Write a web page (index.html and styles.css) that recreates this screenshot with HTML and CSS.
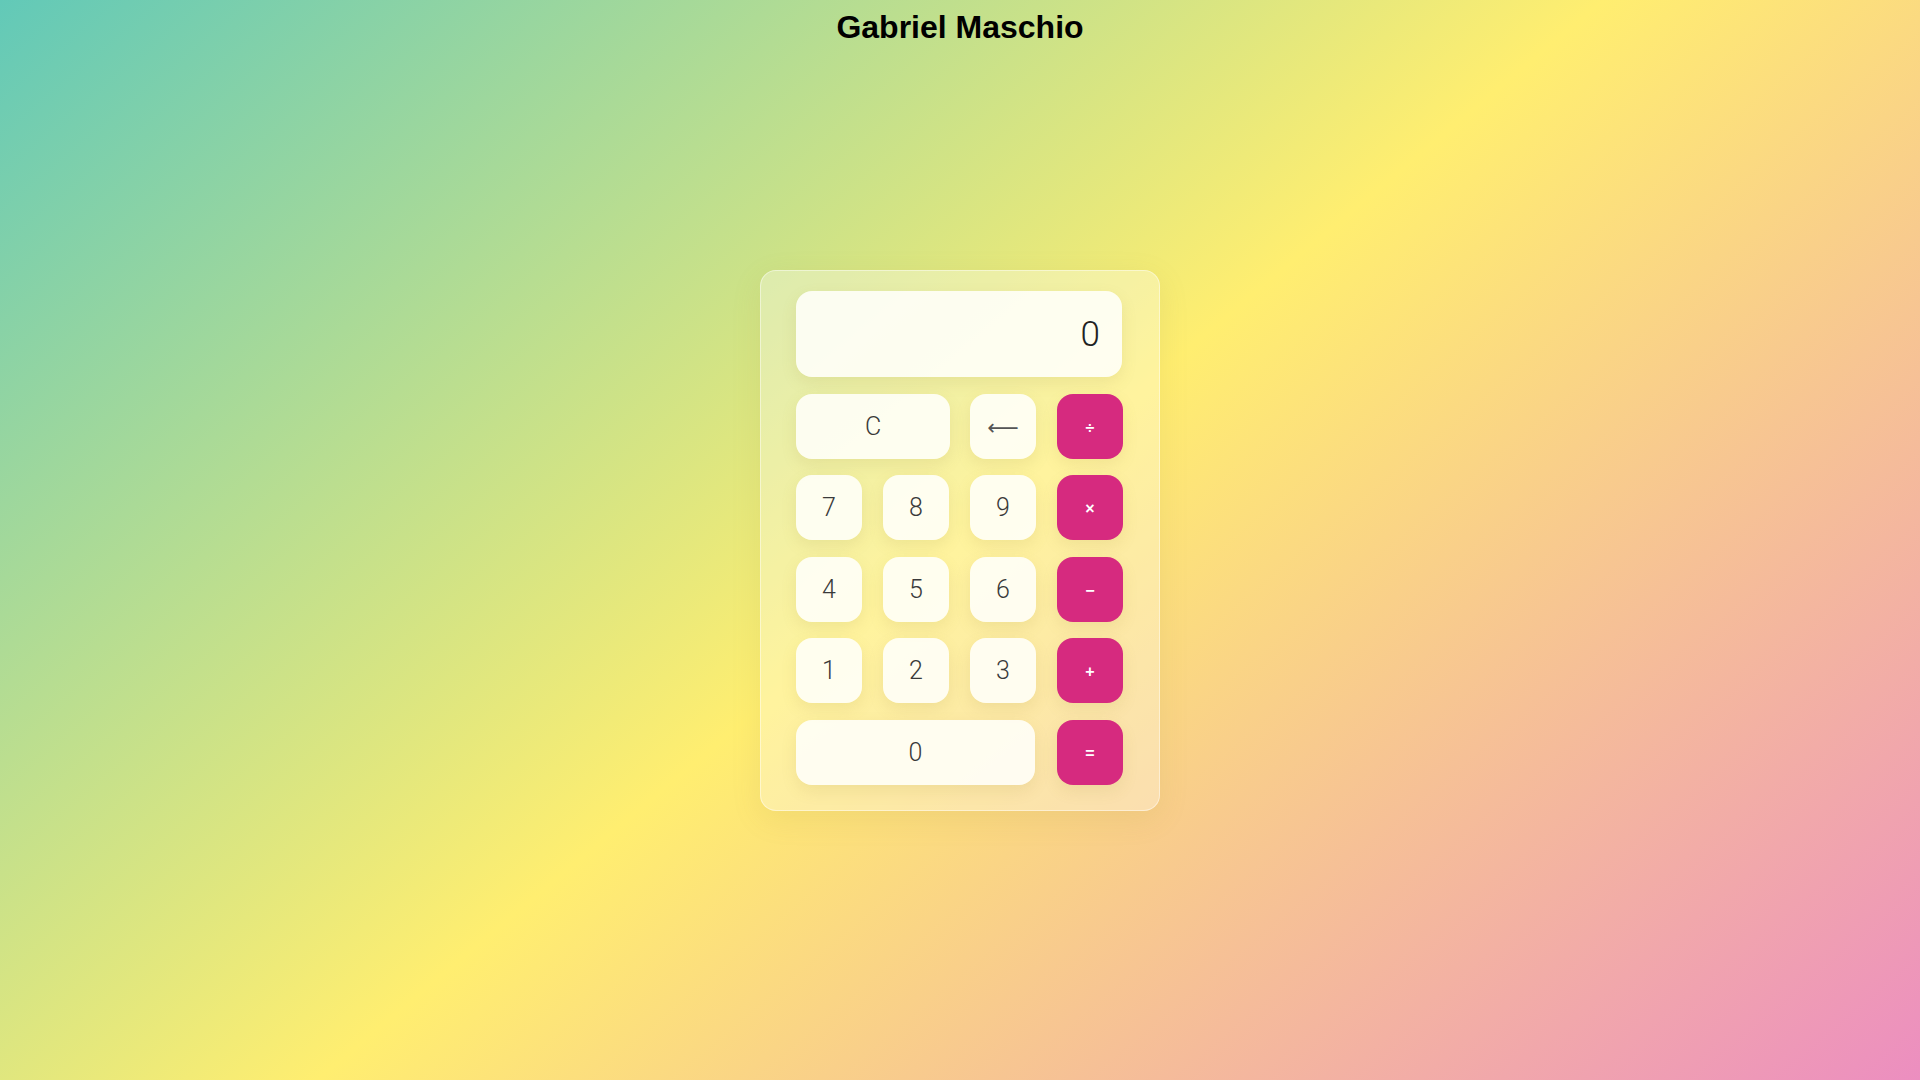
FILE: index.html
```html
<!DOCTYPE html>
<html lang="en">
<head>
<meta charset="utf-8">
<title>Calculadora</title>
<link rel="stylesheet" href="styles.css">
</head>
<body>
<h1 class="title">Gabriel Maschio</h1>
<main class="calculator">
  <div class="display">0</div>
  <button class="key wide">C</button>
  <button class="key arrow">&#x27F5;</button>
  <button class="key op">&divide;</button>
  <button class="key">7</button>
  <button class="key">8</button>
  <button class="key">9</button>
  <button class="key op">&times;</button>
  <button class="key">4</button>
  <button class="key">5</button>
  <button class="key">6</button>
  <button class="key op">&minus;</button>
  <button class="key">1</button>
  <button class="key">2</button>
  <button class="key">3</button>
  <button class="key op">+</button>
  <button class="key triple">0</button>
  <button class="key op">=</button>
</main>
</body>
</html>
```
FILE: styles.css
```css
* { box-sizing: border-box; }
html, body { height: 100%; }
body {
  margin: 0;
  min-height: 100vh;
  display: flex;
  flex-direction: column;
  align-items: center;
  background: linear-gradient(140deg, #62c9b8 0%, #ffee70 50%, #ec8ec0 100%);
  font-family: "Liberation Sans", Arial, sans-serif;
}
.title {
  margin: 0;
  padding-top: 9px;
  font-size: 32px;
  line-height: 37px;
  font-weight: 700;
  color: #000;
}
.calculator {
  margin-top: 224px;
  width: 400px;
  padding: 20px 35px 25px;
  border: 1px solid rgba(255, 255, 255, 0.45);
  border-radius: 16px;
  background: rgba(255, 255, 255, 0.32);
  box-shadow: 0 8px 30px rgba(160, 140, 60, 0.12);
  display: grid;
  grid-template-columns: repeat(4, 66px);
  grid-template-rows: 86px repeat(5, 65px);
  column-gap: 21px;
  row-gap: 16.5px;
}
.display {
  grid-column: 1 / -1;
  width: 326px;
  border-radius: 16px;
  background: rgba(255, 255, 250, 0.88);
  box-shadow: 0 6px 16px rgba(150, 130, 50, 0.12);
  display: flex;
  align-items: center;
  justify-content: flex-end;
  padding-right: 22px;
  font-family: Roboto, "Liberation Sans", sans-serif;
  font-weight: 300;
  font-size: 35px;
  color: #222;
}
.key {
  border: none;
  border-radius: 16px;
  background: rgba(255, 255, 250, 0.88);
  box-shadow: 0 6px 16px rgba(150, 130, 50, 0.12);
  font-family: Roboto, "Liberation Sans", sans-serif;
  font-weight: 300;
  font-size: 25px;
  color: #3a3a3a;
  padding: 0;
  display: flex;
  align-items: center;
  justify-content: center;
}
.key.wide { grid-column: span 2; width: 154px; }
.key.triple { grid-column: span 3; width: 239px; }
.key.arrow {
  font-family: "DejaVu Sans", sans-serif;
  font-weight: 400;
  font-size: 22px;
  color: #555;
  padding-top: 3px;
}
.key.op {
  background: #d62a7f;
  color: #fff;
  font-family: "Liberation Sans", Arial, sans-serif;
  font-weight: 700;
  font-size: 16px;
  padding-top: 3px;
}
```
